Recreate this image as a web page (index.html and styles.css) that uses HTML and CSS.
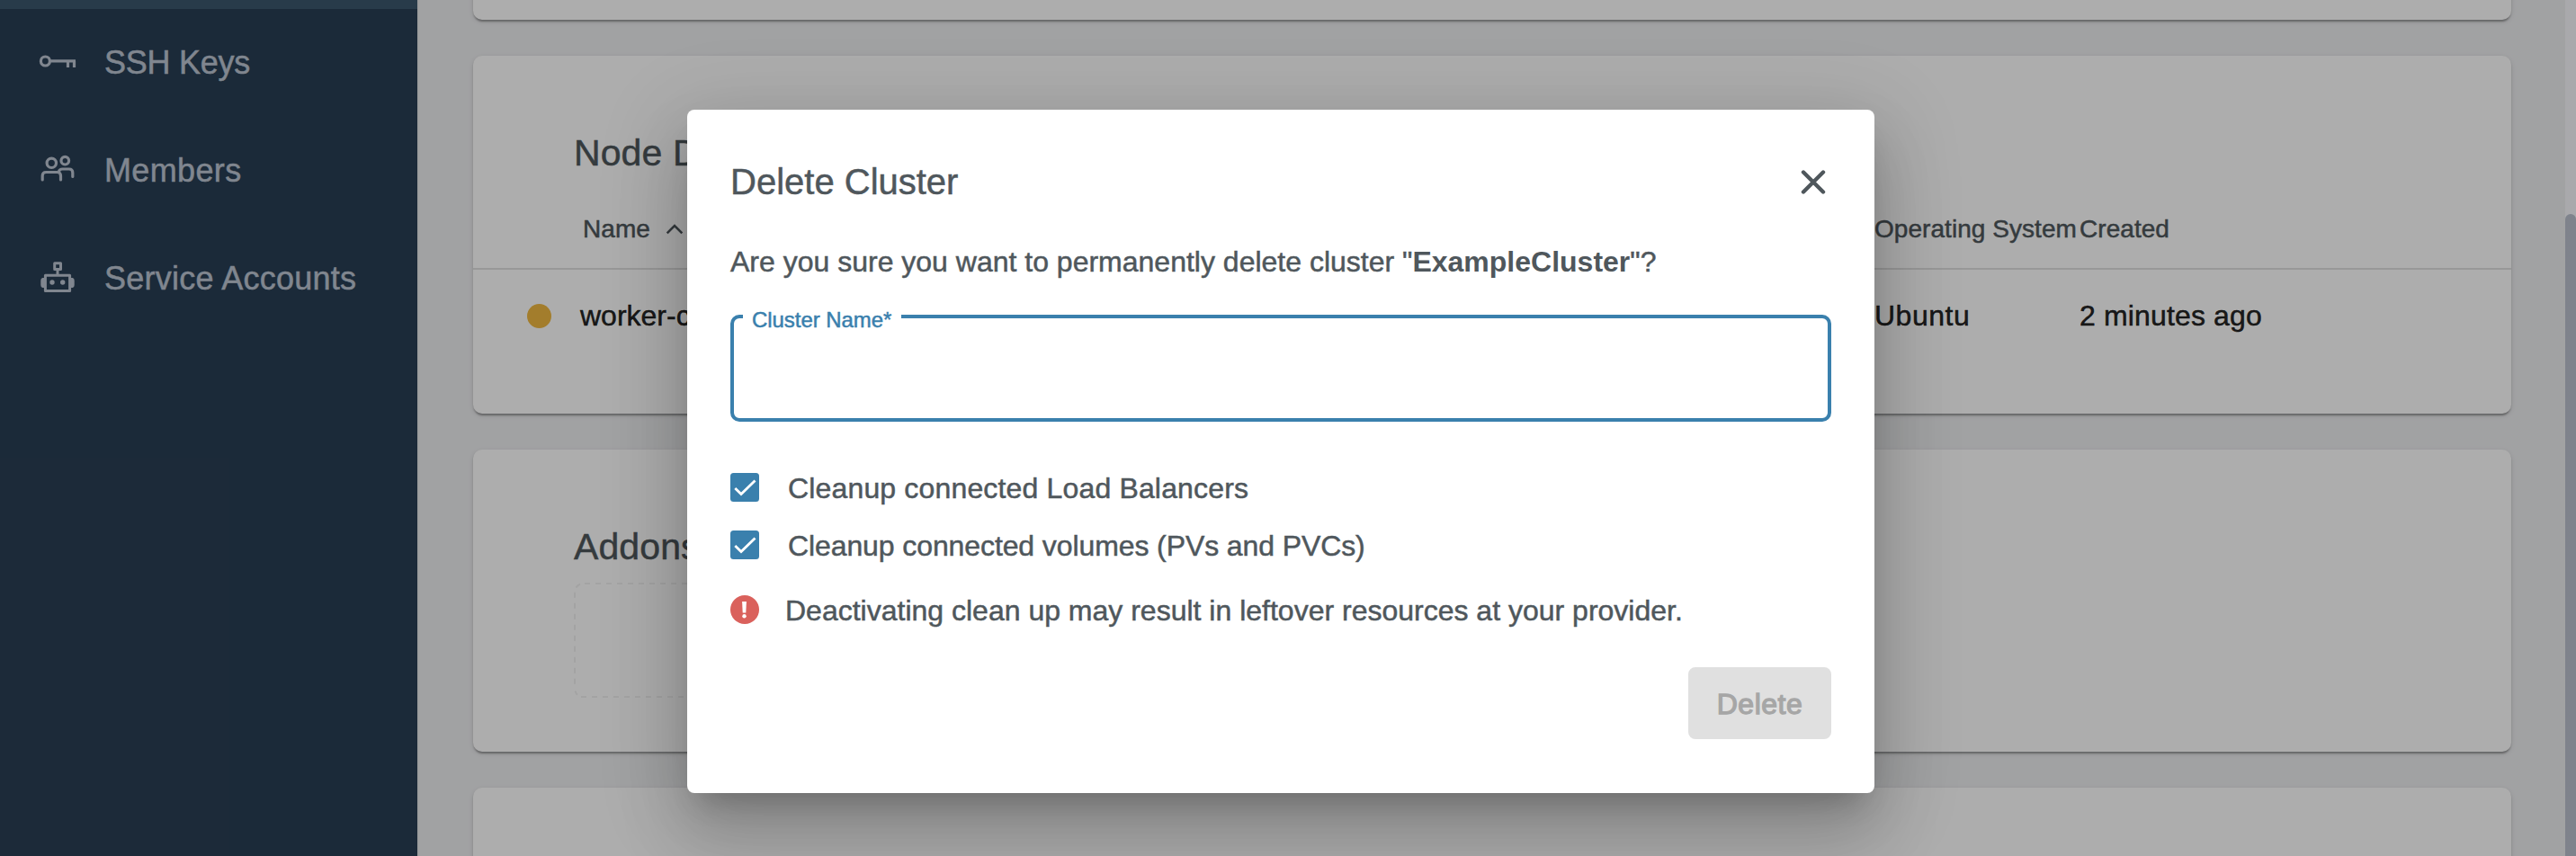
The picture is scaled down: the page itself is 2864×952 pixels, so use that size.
FILE: index.html
```html
<!DOCTYPE html>
<html lang="en">
<head>
<meta charset="utf-8">
<title>Delete Cluster</title>
<link rel="stylesheet" href="styles.css">
</head>
<body>
<div class="app">
  <nav class="sidebar">
    <div class="nav-active"></div>
    <a class="nav-item">
      <svg class="nav-icon" viewBox="0 0 48 60" fill="none" stroke="currentColor" stroke-width="3.200">
        <circle cx="10.400" cy="28" r="5"/>
        <path d="M15.500 27.800H44M35.500 28v7M42.500 28v7"/>
      </svg>
      <span class="ls-ssh">SSH Keys</span>
    </a>
    <a class="nav-item">
      <svg class="nav-icon" viewBox="0 0 48 60" fill="none" stroke="currentColor" stroke-width="3.200" stroke-linecap="round">
        <circle cx="17.300" cy="21.300" r="5.200"/>
        <circle cx="32.300" cy="18.700" r="4.300"/>
        <path d="M7.200 40v-4.500q0-4 4-4h12.300q4 0 4 4V40"/>
        <path d="M25.500 30.500q.8-2.500 4-2.500h7.300q4 0 4 4v4.500"/>
      </svg>
      <span class="ls-members">Members</span>
    </a>
    <a class="nav-item">
      <svg class="nav-icon" viewBox="0 0 48 60" fill="none" stroke="currentColor" stroke-width="3" stroke-linejoin="round">
        <rect x="10.400" y="26.300" width="27.200" height="17.200"/>
        <rect x="20.700" y="12.700" width="6.800" height="6.800"/>
        <path d="M24 20v6"/>
        <g fill="currentColor" stroke="none">
          <circle cx="18" cy="34" r="2.700"/>
          <circle cx="29.700" cy="34" r="2.700"/>
          <path d="M9.500 29H7.200Q5.300 29.500 5.300 32v5q0 2.500 1.900 3h2.300zM38.500 29h2.300q1.900.5 1.900 3v5q0 2.500-1.900 3h-2.300z"/>
        </g>
      </svg>
      <span class="ls-accounts">Service Accounts</span>
    </a>
  </nav>

  <main class="content">
    <section class="card card-top"></section>

    <section class="card card-nodes">
      <h2 class="card-title">Node D</h2>
      <div class="row row-head">
        <span class="head-name">Name
          <svg class="chevron" viewBox="0 0 20 12" fill="none" stroke="currentColor" stroke-width="2.600"><path d="M1.700 10.300 10 2l8.300 8.300"/></svg>
        </span>
        <span>Operating System</span>
        <span>Created</span>
      </div>
      <div class="row row-body">
        <span class="cell-name"><i class="dot"></i>worker-c</span>
        <span class="cell-os">Ubuntu</span>
        <span class="cell-created">2 minutes ago</span>
      </div>
    </section>

    <section class="card card-addons">
      <h2 class="card-title">Addons</h2>
      <svg class="addons-empty" viewBox="0 0 400 128" fill="none" stroke="#f0f0f0" stroke-width="2">
        <path stroke-dasharray="6 6" d="M12 1H400"/>
        <path d="M2.500 5.500Q4 3 7 1.700M1.500 120.500Q2.500 123.500 4 124.800"/>
        <path stroke-dasharray="6 6" d="M1 10.700V118"/>
        <path stroke-dasharray="6 6" d="M8 127H400"/>
      </svg>
    </section>

    <section class="card card-bottom"></section>
  </main>

  <div class="scrollbar"><div class="thumb"></div></div>
</div>

<div class="backdrop">
  <div class="dialog">
    <header class="dialog-head">
      <h1 class="dialog-title">Delete Cluster</h1>
      <svg class="close" viewBox="0 0 28 28" fill="none" stroke="currentColor" stroke-width="4.400" stroke-linecap="round"><path d="M3 3.500l22 22M25 3.500l-22 22"/></svg>
    </header>
    <p class="question">Are you sure you want to permanently delete cluster "<b>ExampleCluster</b>"?</p>
    <div class="field"><label class="field-label">Cluster Name*</label></div>
    <div class="option">
      <svg class="box" viewBox="0 0 32 32"><rect width="32" height="32" rx="3.500" fill="#3a80ad"/><path d="M5.300 17 12 23.600 27.500 8.500" fill="none" stroke="#fff" stroke-width="2.800"/></svg>
      <span class="ls-lb">Cleanup connected Load Balancers</span>
    </div>
    <div class="option option-second">
      <svg class="box" viewBox="0 0 32 32"><rect width="32" height="32" rx="3.500" fill="#3a80ad"/><path d="M5.300 17 12 23.600 27.500 8.500" fill="none" stroke="#fff" stroke-width="2.800"/></svg>
      <span class="ls-vol">Cleanup connected volumes (PVs and PVCs)</span>
    </div>
    <div class="option warning">
      <svg class="box" viewBox="0 0 32 32"><circle cx="16" cy="16" r="16" fill="#da615c"/><path d="M13.100 7h4.800l-.6 12.500h-3.600z" fill="#fff"/><circle cx="15.500" cy="23.300" r="2.200" fill="#fff"/></svg>
      <span>Deactivating clean up may result in leftover resources at your provider.</span>
    </div>
    <footer class="actions"><button class="delete" disabled>Delete</button></footer>
  </div>
</div>
</body>
</html>
```
FILE: styles.css
```css
* { box-sizing: border-box; }

body {
  margin: 0;
  height: 952px;
  overflow: hidden;
  font-family: "Liberation Sans", Arial, sans-serif;
  color: #4f575c;
  -webkit-text-stroke: .5px currentColor;
}

h1, h2, p { margin: 0; font-weight: 400; }
svg { display: block; flex: none; }

.app { display: flex; height: 952px; overflow: hidden; background: #eeeff1; }

/* Sidebar */
.sidebar { width: 464px; flex: none; background: #293e54; color: #bdc6d3; }
.nav-active { height: 10px; background: #3b576d; }
.nav-item {
  display: flex;
  align-items: center;
  gap: 28px;
  height: 120px;
  padding-left: 40px;
  font-size: 36px;
  line-height: 44px;
}
.nav-icon { width: 48px; height: 60px; }
.ls-ssh { letter-spacing: -.25px; }
.ls-members { letter-spacing: .35px; }
.ls-accounts { letter-spacing: .26px; }

/* Content cards */
.content {
  flex: 1;
  display: flex;
  flex-direction: column;
  gap: 40px;
  padding: 0 60px;
  border-left: 2px solid #e6e7e9;
}
.card {
  flex: none;
  background: #fff;
  border-radius: 10px;
  box-shadow: 0 4px 2px -2px rgba(0, 0, 0, .2), 0 2px 2px rgba(0, 0, 0, .14), 0 2px 6px rgba(0, 0, 0, .12);
}
.card-top { height: 42px; margin-top: -20px; }
.card-nodes { height: 398px; padding-top: 84px; }
.card-addons { height: 336px; padding-top: 84px; }
.card-bottom { height: 120px; }
.card-title { padding-left: 112px; font-size: 41px; line-height: 48px; letter-spacing: .1px; }

.row { display: grid; grid-template-columns: 1558px 228px 1fr; align-items: center; }
.row-head {
  height: 90px;
  margin-top: 16px;
  padding-top: 2px;
  border-bottom: 2px solid rgba(0, 0, 0, .12);
  font-size: 28px;
  letter-spacing: .05px;
}
.head-name { display: flex; align-items: center; gap: 17px; padding-left: 122px; }
.chevron { width: 20px; height: 12px; }
.row-body { height: 102px; font-size: 32px; color: rgba(0, 0, 0, .87); }
.cell-name { display: flex; align-items: center; padding-left: 60px; }
.dot { width: 27px; height: 27px; margin-right: 32px; border-radius: 50%; background: #f0b941; }
.cell-os { letter-spacing: .5px; }
.cell-created { letter-spacing: .15px; }

.addons-empty { width: 400px; height: 128px; margin: 16px 0 0 112px; }

/* Page scrollbar */
.scrollbar { width: 12px; flex: none; padding-top: 238px; background: #f9fafe; }
.thumb { height: 714px; border-radius: 6px 6px 0 0; background: #bbc1ce; }

/* Dialog */
.backdrop {
  position: absolute;
  inset: 0;
  overflow: hidden;
  padding: 122px 0 0 764px;
  background: rgba(0, 0, 0, .32);
}
.dialog {
  width: 1320px;
  height: 760px;
  padding: 56px 48px 60px;
  border-radius: 8px;
  background: #fff;
  box-shadow: 0 22px 30px -14px rgba(0, 0, 0, .2), 0 48px 76px 6px rgba(0, 0, 0, .14), 0 18px 92px 16px rgba(0, 0, 0, .12);
}
.dialog-head { display: flex; align-items: center; justify-content: space-between; height: 48px; }
.dialog-title { font-size: 40px; line-height: 48px; }
.close { width: 28px; height: 28px; margin-right: 6px; }
.question { margin-top: 45px; font-size: 32px; line-height: 40px; }
.question b { -webkit-text-stroke: 0; }
.field {
  position: relative;
  height: 119px;
  margin: 39px 0 57px;
  border: 4px solid #3a80ad;
  border-radius: 10px;
}
.field-label {
  position: absolute;
  top: -12px;
  left: 10px;
  width: 176px;
  padding-left: 10px;
  background: #fff;
  color: #3a80ad;
  font-size: 24px;
  line-height: 28px;
  letter-spacing: -.05px;
}
.option { display: flex; gap: 32px; height: 32px; font-size: 32px; line-height: 34px; white-space: nowrap; }
.option-second { margin-top: 32px; }
.warning { margin-top: 40px; gap: 29px; }
.box { width: 32px; height: 32px; }
.ls-lb { letter-spacing: .16px; }
.ls-vol { letter-spacing: -.1px; }
.actions { display: flex; justify-content: flex-end; margin-top: 48px; }
.delete {
  width: 159px;
  height: 80px;
  padding: 2px 0 0;
  border: 0;
  border-radius: 8px;
  background: #e0e0e0;
  color: #a6a6a6;
  font: 32px "Liberation Sans", Arial, sans-serif;
  letter-spacing: .5px;
  -webkit-text-stroke: 1.3px #a6a6a6;
}
```
